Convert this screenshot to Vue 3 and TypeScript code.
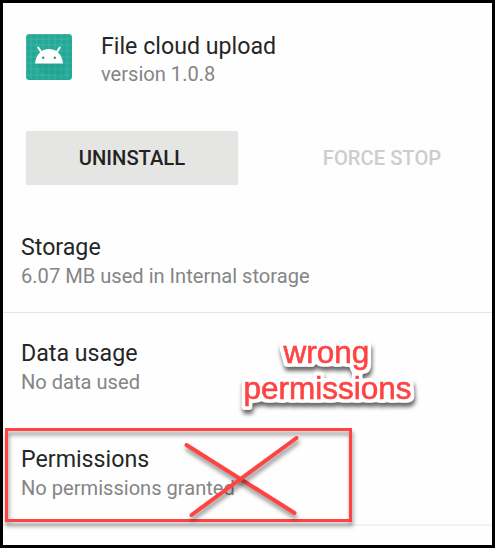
<script setup lang="ts">
interface Setting {
  title: string
  detail: string
  kind: string
}

const settings: Setting[] = [
  { title: 'Storage', detail: '6.07 MB used in Internal storage', kind: 'storage' },
  { title: 'Data usage', detail: 'No data used', kind: 'data' },
  { title: 'Permissions', detail: 'No permissions granted', kind: 'permissions' },
]
const gridLines: number[] = [5, 11, 17, 23, 29, 35, 41]
</script>

<template>
  <main class="screen">
    <header class="app-info">
      <svg class="app-icon" viewBox="0 0 46 46" aria-hidden="true">
        <rect width="46" height="46" rx="3.5" fill="#23a996" />
        <g stroke="#52bdaf" stroke-width="0.6">
          <line v-for="p in gridLines" :key="'v' + p" :x1="p" :x2="p" y1="1" y2="45" />
          <line v-for="p in gridLines" :key="'h' + p" :y1="p" :y2="p" x1="1" x2="45" />
        </g>
        <path d="M0.5 42.5v-39q0-3 3-3h39q3 0 3 3" fill="none" stroke="#53b5a7" stroke-width="0.8" />
        <path d="M9 29.5L37 29.5 38 42 18 40Z" fill="#128f7e" opacity="0.22" />
        <path d="M12.3 13.5l3.5 5.5M33.7 13.5l-3.5 5.5" stroke="#fff" stroke-width="2" stroke-linecap="round" />
        <path d="M9 29.5C9.5 21 15.5 15 23 15s13.5 6 14 14.5z" fill="#fff" />
        <circle cx="17.2" cy="23.8" r="1.2" fill="#43877e" />
        <circle cx="28.8" cy="23.8" r="1.2" fill="#43877e" />
      </svg>
      <div>
        <h1 class="title app-name">File cloud upload</h1>
        <p class="detail version">version 1.0.8</p>
      </div>
    </header>
    <div class="actions">
      <button class="action uninstall" type="button">UNINSTALL</button>
      <button class="action force" type="button" disabled>FORCE STOP</button>
    </div>
    <section v-for="s in settings" :key="s.kind" class="setting" :class="s.kind">
      <h2 class="title">{{ s.title }}</h2>
      <p class="detail">{{ s.detail }}</p>
    </section>

    <svg class="markup" viewBox="0 0 495 548">
      <defs>
        <filter id="halo" x="-15%" y="-20%" width="130%" height="150%" color-interpolation-filters="sRGB">
          <feMorphology in="SourceAlpha" operator="dilate" radius="3" />
          <feGaussianBlur stdDeviation="1" />
          <feComponentTransfer result="edge">
            <feFuncA type="linear" slope="4" intercept="-0.8" />
          </feComponentTransfer>
          <feGaussianBlur in="edge" stdDeviation="2" />
          <feOffset dx="1" dy="4" result="soft" />
          <feFlood flood-color="#000" flood-opacity="0.6" />
          <feComposite in2="soft" operator="in" result="shadow" />
          <feFlood flood-color="#fff" />
          <feComposite in2="edge" operator="in" result="white" />
          <feMerge>
            <feMergeNode in="shadow" />
            <feMergeNode in="white" />
            <feMergeNode in="SourceGraphic" />
          </feMerge>
        </filter>
      </defs>
      <g class="callout" filter="url(#halo)">
        <text x="326.5" y="363" text-anchor="middle">wrong</text>
        <text x="327.5" y="399" text-anchor="middle">permissions</text>
      </g>
      <g class="strokes">
        <rect x="6.5" y="429.5" width="344" height="91" />
      </g>
      <g class="strokes cross">
        <path d="M186.5 445L294.5 513" />
      </g>
      <g class="strokes cross">
        <path d="M296.5 438L191.5 515" />
      </g>
    </svg>
  </main>
</template>

<style>
body {
  margin: 0;
  background: #fff;
}
</style>

<style scoped>
.screen {
  position: relative;
  box-sizing: border-box;
  width: 495px;
  height: 548px;
  border: 3px solid #000;
  overflow: hidden;
  background: #fefefe;
  font-family: Roboto, sans-serif;
}
.app-info {
  display: flex;
  gap: 29px;
  height: 128px;
  box-sizing: border-box;
  padding: 28px 23px 0;
}
.app-icon {
  width: 46px;
  height: 46px;
  margin-top: 3px;
}
.title,
.detail {
  margin: 0;
  font-weight: 400;
  white-space: nowrap;
}
.title {
  font-size: 23.2px;
  line-height: 28px;
  color: #262626;
}
.detail {
  margin-top: 1px;
  font-size: 20.1px;
  line-height: 28px;
  color: #858585;
}
.app-name {
  padding-top: 1px;
}
.version {
  margin-top: 0;
}
.actions {
  display: flex;
  gap: 38px;
  padding-left: 23px;
  height: 75px;
}
.action {
  width: 212px;
  height: 54px;
  padding: 0;
  border: 0;
  border-radius: 3px;
  background: transparent;
  font: 500 20.2px/54px Roboto, sans-serif;
  color: #222;
}
.uninstall {
  background: #e5e5e3;
  box-shadow: 0 0 1px #d4d4d2;
}
.force {
  color: #cdcdcd;
}
.setting {
  box-sizing: border-box;
  height: 106px;
  padding: 26px 18px 0;
}
.storage {
  height: 107px;
  padding-top: 27px;
  border-bottom: 1px solid #e5e5e5;
}
.permissions {
  height: 107px;
  border-bottom: 2px solid #f2f2f2;
}
.markup {
  position: absolute;
  left: -3px;
  top: -3px;
  width: 495px;
  height: 548px;
}
.callout {
  font-family: "Liberation Sans", Arial, sans-serif;
  font-size: 31.5px;
  fill: #ff4242;
  stroke: #ff4242;
  stroke-width: 0.6px;
}
.strokes {
  fill: none;
  stroke: #ff4242;
  stroke-width: 3px;
  filter: drop-shadow(1px 4px 2px rgba(0, 0, 0, 0.45));
}
.cross {
  stroke-width: 4px;
  stroke-linecap: round;
}
</style>
